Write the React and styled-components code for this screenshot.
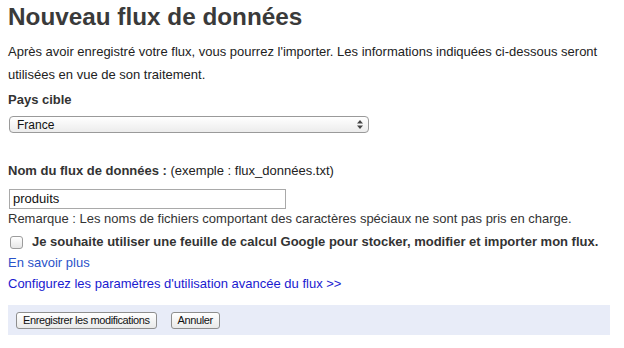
import React from 'react'
import styled, { createGlobalStyle } from 'styled-components'

const GlobalStyle = createGlobalStyle`
    body {
        margin: 0;
        background: #ffffff;
        font-family: "Liberation Sans", Arial, sans-serif;
        font-size: 13px;
        color: #222222;
    }
`

const Page = styled.div`
    width: 602px;
    padding: 0 8px;
`

const Title = styled.h1`
    margin: 0;
    padding-top: 2px;
    font-size: 24.3px;
    line-height: 30px;
    font-weight: bold;
    color: #3a3a3a;
`

const Intro = styled.p`
    margin: 8px 0 0;
    line-height: 23px;
`

const Label = styled.div`
    margin-top: ${(props) => props.top || 0}px;
    line-height: 18px;
    font-weight: bold;
    color: #333333;
`

const Hint = styled.span`
    font-weight: normal;
    color: #222222;
`

const Select = styled.div`
    display: flex;
    align-items: center;
    justify-content: space-between;
    width: 360px;
    height: 17px;
    margin: 7px 0 0 1px;
    padding: 0 5px 0 7px;
    box-sizing: border-box;
    border: 1px solid #9a9a9a;
    border-radius: 4px;
    background: linear-gradient(#ffffff, #ececec);
    font-size: 12px;
    color: #111111;
`

const Arrows = styled.svg`
    width: 6px;
    height: 9px;
`

const TextInput = styled.div`
    width: 277px;
    height: 20px;
    margin: 9px 0 0 1px;
    padding: 0 3px;
    box-sizing: border-box;
    border: 1px solid #a9a9a9;
    line-height: 18px;
    font-size: 13px;
    color: #111111;
`

const Note = styled.div`
    margin-top: 1px;
    line-height: 18px;
    color: #333333;
`

const CheckRow = styled.label`
    display: flex;
    align-items: center;
    gap: 9px;
    margin: 5px 0 0 2px;
    line-height: 18px;
    font-weight: bold;
    color: #333333;
`

const Box = styled.span`
    width: 11px;
    height: 11px;
    border: 1px solid #9c9c9c;
    border-radius: 3px;
    background: linear-gradient(#ffffff, #e6e6e6);
`

const Link = styled.a`
    display: block;
    margin-top: ${(props) => props.top}px;
    line-height: 18px;
    color: ${(props) => props.color};
    text-decoration: none;
`

const Footer = styled.div`
    display: flex;
    gap: 14px;
    margin-top: 12px;
    padding: 7px 8px 6px;
    background: #e8ecf8;
`

const Button = styled.div`
    height: 15px;
    padding: 0 6px;
    border: 1px solid #8e8e8e;
    border-radius: 3px;
    background: linear-gradient(#ffffff, #e9e9e9);
    font-size: 11px;
    letter-spacing: -0.4px;
    line-height: 15px;
    color: #111111;
`

export default function App() {
    return (
        <Page>
            <GlobalStyle />
            <Title>Nouveau flux de données</Title>
            <Intro>
                Après avoir enregistré votre flux, vous pourrez l'importer. Les informations indiquées ci-dessous seront
                utilisées en vue de son traitement.
            </Intro>
            <Label top={5}>Pays cible</Label>
            <Select>
                France
                <Arrows viewBox="0 0 6 9">
                    <path d="M0 3.5 L3 0 L6 3.5 Z M0 5.5 L3 9 L6 5.5 Z" fill="#444" />
                </Arrows>
            </Select>
            <Label top={29}>
                Nom du flux de données : <Hint>(exemple : flux_données.txt)</Hint>
            </Label>
            <TextInput>produits</TextInput>
            <Note>Remarque : Les noms de fichiers comportant des caractères spéciaux ne sont pas pris en charge.</Note>
            <CheckRow>
                <Box />
                Je souhaite utiliser une feuille de calcul Google pour stocker, modifier et importer mon flux.
            </CheckRow>
            <Link href="#" top={3} color="#2a52c9">En savoir plus</Link>
            <Link href="#" top={3} color="#1a1ad0">Configurez les paramètres d'utilisation avancée du flux &gt;&gt;</Link>
            <Footer>
                <Button>Enregistrer les modifications</Button>
                <Button>Annuler</Button>
            </Footer>
        </Page>
    )
}
